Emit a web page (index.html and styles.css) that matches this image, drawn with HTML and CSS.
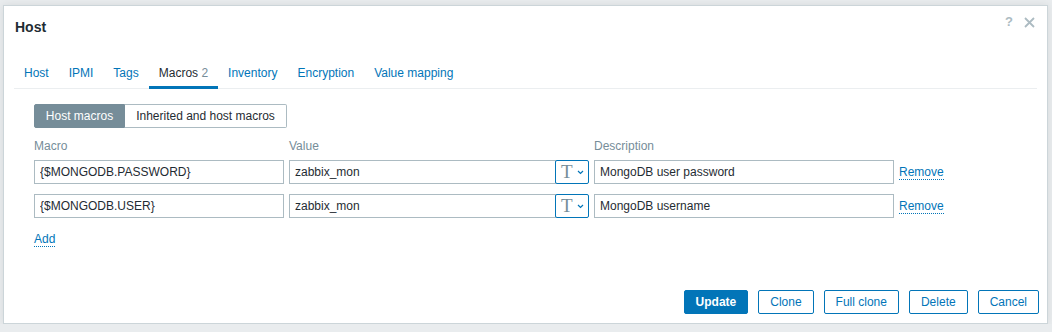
FILE: index.html
```html
<!DOCTYPE html>
<html lang="en">
<head>
  <meta charset="UTF-8" />
  <title>Host</title>
  <link rel="stylesheet" href="styles.css">
</head>
<body>
  <div class="dialog">
    <div class="head">
      <h4>Host</h4>
      <div class="head-icons">
        <span class="help">?</span>
        <svg class="close" width="11" height="11" viewBox="0 0 11 11">
          <path d="M1 1 L10 10 M10 1 L1 10" stroke="#acbbc2" stroke-width="1.8" fill="none"/>
        </svg>
      </div>
    </div>

    <ul class="tabs">
      <li><a href="#">Host</a></li>
      <li><a href="#">IPMI</a></li>
      <li><a href="#">Tags</a></li>
      <li class="active"><a href="#">Macros <span class="count">2</span></a></li>
      <li><a href="#">Inventory</a></li>
      <li><a href="#">Encryption</a></li>
      <li><a href="#">Value mapping</a></li>
    </ul>

    <div class="panel">
      <div class="segment">
        <span class="seg on">Host macros</span>
        <span class="seg">Inherited and host macros</span>
      </div>

      <div class="labels">
        <span class="col-macro">Macro</span>
        <span class="col-value">Value</span>
        <span class="col-desc">Description</span>
      </div>

      <div class="row">
        <input class="col-macro" type="text" value="{$MONGODB.PASSWORD}">
        <div class="value-wrap">
          <input class="col-value" type="text" value="zabbix_mon">
          <button class="type-btn"><span class="t">T</span><svg width="7" height="5" viewBox="0 0 7 5"><path d="M1 1 L3.5 3.5 L6 1" stroke="#0275b8" stroke-width="1.2" fill="none"/></svg></button>
        </div>
        <input class="col-desc" type="text" value="MongoDB user password">
        <a class="link" href="#">Remove</a>
      </div>

      <div class="row">
        <input class="col-macro" type="text" value="{$MONGODB.USER}">
        <div class="value-wrap">
          <input class="col-value" type="text" value="zabbix_mon">
          <button class="type-btn"><span class="t">T</span><svg width="7" height="5" viewBox="0 0 7 5"><path d="M1 1 L3.5 3.5 L6 1" stroke="#0275b8" stroke-width="1.2" fill="none"/></svg></button>
        </div>
        <input class="col-desc" type="text" value="MongoDB username">
        <a class="link" href="#">Remove</a>
      </div>

      <a class="link add" href="#">Add</a>
    </div>

    <div class="footer">
      <button class="btn primary">Update</button>
      <button class="btn">Clone</button>
      <button class="btn">Full clone</button>
      <button class="btn">Delete</button>
      <button class="btn">Cancel</button>
    </div>
  </div>
</body>
</html>
```

FILE: styles.css
```css
body {
  margin: 0;
  padding: 5px 0 0 3px;
  background: #e9ecee;
  font-family: 'Liberation Sans', Arial, sans-serif;
  font-size: 12px;
  color: #1f2c33;
}

.dialog {
  width: 1045px;
  height: 319px;
  box-sizing: border-box;
  background: #fff;
  border: 1px solid #ccd5d9;
  box-shadow: 0 0 8px rgba(0,0,0,0.08);
  display: flex;
  flex-direction: column;
}

.head {
  display: flex;
  justify-content: space-between;
  padding: 12px 12px 0 11px;
  height: 30px;
}

.head h4 {
  margin: 0;
  font-size: 14px;
  font-weight: bold;
  line-height: 18px;
  color: #1f2c33;
}

.head-icons {
  display: flex;
  gap: 11px;
  align-items: flex-start;
  margin-top: -4px;
}

.help {
  color: #acbbc2;
  font-size: 13px;
  font-weight: bold;
  line-height: 16px;
}

.close {
  margin-top: 3px;
}

.tabs {
  list-style: none;
  margin: 8px 10px 0;
  padding: 0;
  display: flex;
  border-bottom: 1px solid #ebeef0;
}

.tabs li {
  padding: 9px 10px 5px;
  line-height: 16px;
  border-bottom: 3px solid transparent;
  margin-bottom: -1px;
}

.tabs a {
  color: #0275b8;
  text-decoration: none;
}

.tabs li.active {
  border-bottom-color: #0275b8;
}

.tabs li.active a {
  color: #1f2c33;
}

.count {
  color: #768d99;
}

.panel {
  padding: 15px 30px 0;
}

.segment {
  display: flex;
}

.seg {
  height: 24px;
  line-height: 22px;
  box-sizing: border-box;
  border: 1px solid #acbbc2;
  padding: 0 11px;
}

.seg.on {
  background: #768d99;
  border-color: #768d99;
  color: #fff;
  border-radius: 2px 0 0 2px;
  width: 91px;
  text-align: center;
  padding: 0;
}

.seg:last-child {
  border-left: none;
  border-radius: 0 2px 2px 0;
  width: 162px;
  text-align: center;
  padding: 0;
}

.labels {
  display: flex;
  gap: 5px;
  margin-top: 10px;
  line-height: 16px;
  color: #768d99;
}

.labels .col-value {
  width: 300px;
}

.col-macro {
  width: 250px;
}

.col-value {
  width: 267px;
}

.col-desc {
  width: 300px;
}

.row {
  display: flex;
  align-items: center;
  gap: 5px;
  margin-top: 6px;
}

.row + .row {
  margin-top: 10px;
}

input {
  height: 24px;
  box-sizing: border-box;
  border: 1px solid #acbbc2;
  padding: 0 5px;
  font-family: inherit;
  font-size: 12px;
  color: #1f2c33;
  margin: 0;
}

.value-wrap {
  display: flex;
}

.type-btn {
  width: 34px;
  height: 24px;
  box-sizing: border-box;
  border: 1px solid #0275b8;
  border-radius: 2px;
  background: #fff;
  margin-left: -1px;
  padding: 0 0 0 5px;
  display: flex;
  align-items: center;
  gap: 4px;
}

.type-btn .t {
  font-family: 'Liberation Serif', 'Times New Roman', serif;
  font-size: 19px;
  color: #768d99;
  line-height: 20px;
}

.link {
  color: #0275b8;
  text-decoration: none;
  border-bottom: 1px dotted #0275b8;
  line-height: 14px;
}

.add {
  display: inline-block;
  margin-top: 14px;
}

.footer {
  margin-top: auto;
  display: flex;
  justify-content: flex-end;
  gap: 10px;
  padding: 0 8px 9px;
}

.btn {
  height: 24px;
  box-sizing: border-box;
  padding: 0 11px;
  border: 1px solid #0275b8;
  border-radius: 2px;
  background: #fff;
  color: #0275b8;
  font-family: inherit;
  font-size: 12px;
}

.btn.primary {
  background: #0275b8;
  color: #fff;
  font-weight: bold;
}
```
